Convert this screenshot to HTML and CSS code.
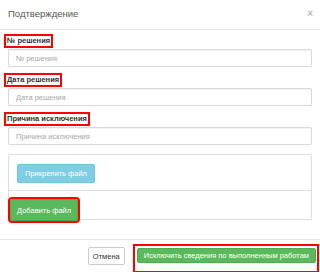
FILE: index.html
```html
<!DOCTYPE html>
<html lang="ru">
<head>
    <meta charset="UTF-8">
    <meta name="viewport" content="width=device-width, initial-scale=1.0">
    <title>Подтверждение</title>
    <link rel="stylesheet" href="styles.css">
</head>
<body>
    <div class="modal">
        <div class="modal-header">
            <h4 class="modal-title">Подтверждение</h4>
            <span class="close">&times;</span>
        </div>

        <div class="modal-body">
            <div class="form-group">
                <label class="field-label" for="num">№ решения</label>
                <input type="text" id="num" class="form-control" placeholder="№ решения">
            </div>
            <div class="form-group">
                <label class="field-label" for="date">Дата решения</label>
                <input type="text" id="date" class="form-control" placeholder="Дата решения">
            </div>
            <div class="form-group">
                <label class="field-label" for="reason">Причина исключения</label>
                <input type="text" id="reason" class="form-control" placeholder="Причина исключения">
            </div>

            <div class="panel">
                <div class="panel-body">
                    <button class="btn btn-info">Прикрепить файл</button>
                </div>
                <div class="panel-footer">
                    <button class="btn btn-success btn-marked">Добавить файл</button>
                </div>
            </div>
        </div>

        <div class="modal-footer">
            <button class="btn btn-default btn-cancel">Отмена</button>
            <span class="marked-box">
                <button class="btn btn-success btn-submit">Исключить сведения по выполненным работам</button>
            </span>
        </div>
        <div class="bottom-bar"></div>
    </div>
</body>
</html>
```

FILE: styles.css
```css
* {
    margin: 0;
    padding: 0;
    box-sizing: border-box;
}

html, body {
    width: 320px;
    height: 272px;
    overflow: hidden;
}

body {
    font-family: 'Liberation Sans', Arial, sans-serif;
    background: #ffffff;
    color: #333333;
}

.modal {
    background: #ffffff;
}

.modal-header {
    height: 30px;
    display: flex;
    align-items: center;
    justify-content: space-between;
    padding: 0 7px 2px 8px;
    border-bottom: 1px solid #e5e5e5;
}

.modal-title {
    font-size: 9.5px;
    font-weight: 400;
    color: #555555;
}

.close {
    font-size: 10px;
    font-weight: 700;
    color: #bbbbbb;
    line-height: 1;
}

.modal-body {
    padding: 6px 8px 19px 8px;
}

.form-group {
    margin-bottom: 8px;
}

.field-label {
    display: block;
    width: fit-content;
    margin-left: -2px;
    margin-bottom: 3px;
    padding: 0 1px;
    font-size: 7.5px;
    font-weight: 700;
    line-height: 10px;
    color: #333333;
    outline: 2px solid #ff0000;
}

.form-control {
    display: block;
    width: 100%;
    height: 18px;
    padding: 0 7px;
    font-family: inherit;
    font-size: 7.5px;
    color: #555555;
    border: 1px solid #d9d9d9;
    border-radius: 2px;
    box-shadow: inset 0 1px 1px rgba(0, 0, 0, 0.05);
}

.form-control::placeholder {
    color: #a8a8a8;
}

.panel {
    margin-top: 9px;
    border: 1px solid #dddddd;
    border-radius: 2px;
}

.panel-body {
    padding: 7px 8px;
}

.panel-footer {
    border-top: 1px solid #dddddd;
    padding: 8px 0 0 0;
}

.btn {
    font-family: inherit;
    font-size: 7.5px;
    border: 1px solid transparent;
    border-radius: 2px;
    cursor: pointer;
    white-space: nowrap;
}

.btn-info {
    height: 19px;
    padding: 0 7px;
    background: #7fcde5;
    border-color: #72c6e0;
    color: #ffffff;
}

.btn-success {
    background: #5cb85c;
    border-color: #4cae4c;
    color: #ffffff;
}

.btn-marked {
    display: block;
    height: 22px;
    margin-left: 1px;
    margin-bottom: -2px;
    padding: 0 6px;
    outline: 2px solid #ff0000;
}

.modal-footer {
    height: 33px;
    display: flex;
    align-items: flex-start;
    justify-content: flex-end;
    gap: 8px;
    padding: 4px 1px 0 0;
    border-top: 1px solid #e5e5e5;
}

.btn-default {
    background: #ffffff;
    border-color: #cccccc;
    color: #333333;
}

.btn-cancel {
    height: 18px;
    margin-top: 3px;
    padding: 0 4px;
}

.marked-box {
    display: inline-block;
    border: 2px solid #ff0000;
    padding: 2px 1px 8px 2px;
}

.btn-submit {
    display: block;
    height: 15px;
    padding: 0 6px;
}

.bottom-bar {
    height: 2px;
    background: #5a5a5a;
}
```
